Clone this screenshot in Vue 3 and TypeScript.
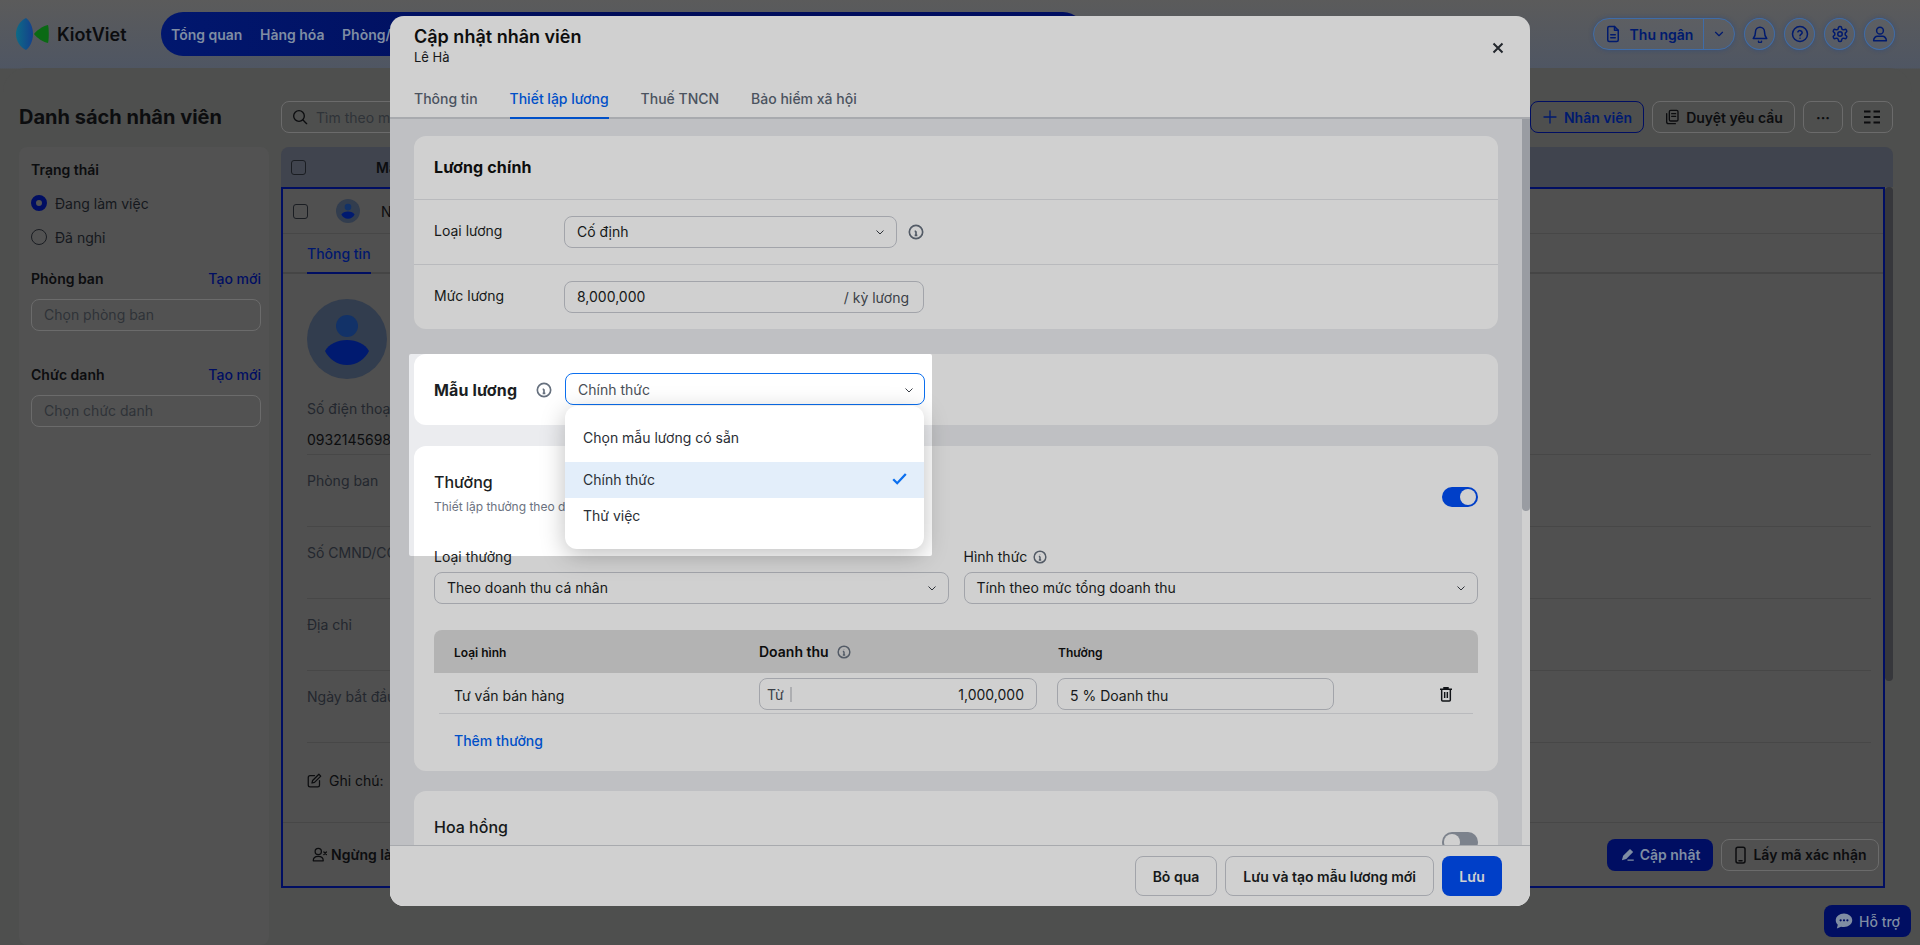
<script setup lang="ts">
const navItems = ['Tổng quan', 'Hàng hóa', 'Phòng/Bàn']
const tabs = ['Thông tin', 'Thiết lập lương', 'Thuế TNCN', 'Bảo hiểm xã hội']
const fields = ['Phòng ban', 'Số CMND/CCCD', 'Địa chỉ', 'Ngày bắt đầu làm việc']
const options = ['Chọn mẫu lương có sẵn', 'Chính thức', 'Thử việc']
</script>

<template>
  <div class="page">
    <header class="topbar">
      <div class="logo">
        <svg width="33" height="32" viewBox="0 0 33 32">
          <defs>
            <linearGradient id="lg" x1="0" y1="0" x2="1" y2="0">
              <stop offset="0" stop-color="#0d6a86" />
              <stop offset="1" stop-color="#14408c" />
            </linearGradient>
          </defs>
          <path d="M10 0C4 3 0 9 0 16s4 13 10 16c4-3 7-9 7-16S14 3 10 0z" fill="url(#lg)" />
          <path d="M32 7c-5 1-11 5-14 9 3 4 9 8 14 9 1-3 1-15 0-18z" fill="#0a6a14" />
        </svg>
        <span>KiotViet</span>
      </div>
      <nav class="nav">
        <a v-for="n in navItems" :key="n">{{ n }}</a>
      </nav>
      <div class="top-actions">
        <div class="cashier">
          <span class="cashier-main">
            <svg width="18" height="18" viewBox="0 0 24 24" class="ic"><path d="M14 2H7a2 2 0 0 0-2 2v16a2 2 0 0 0 2 2h10a2 2 0 0 0 2-2V7z" /><path d="M14 2v5h5M9 13h6M9 17h6" /></svg>
            Thu ngân
          </span>
          <span class="cashier-caret">
            <svg width="14" height="14" viewBox="0 0 24 24" class="ic"><path d="M6 9l6 6 6-6" /></svg>
          </span>
        </div>
        <span class="round">
          <svg width="18" height="18" viewBox="0 0 24 24" class="ic"><path d="M6 9a6 6 0 0 1 12 0c0 6 2 8 3 9H3c1-1 3-3 3-9" /><path d="M10 21.5a2 2 0 0 0 4 0" /></svg>
        </span>
        <span class="round">
          <svg width="18" height="18" viewBox="0 0 24 24" class="ic"><circle cx="12" cy="12" r="10" /><path d="M9.2 9.2a3 3 0 0 1 5.7 1c0 2-2.9 2.6-2.9 4" /><path d="M12 17.6v.1" /></svg>
        </span>
        <span class="round">
          <svg width="18" height="18" viewBox="0 0 24 24" class="ic"><path d="M12.22 2h-.44a2 2 0 0 0-2 2v.18a2 2 0 0 1-1 1.73l-.43.25a2 2 0 0 1-2 0l-.15-.08a2 2 0 0 0-2.73.73l-.22.38a2 2 0 0 0 .73 2.73l.15.1a2 2 0 0 1 1 1.72v.51a2 2 0 0 1-1 1.74l-.15.09a2 2 0 0 0-.73 2.73l.22.38a2 2 0 0 0 2.73.73l.15-.08a2 2 0 0 1 2 0l.43.25a2 2 0 0 1 1 1.73V20a2 2 0 0 0 2 2h.44a2 2 0 0 0 2-2v-.18a2 2 0 0 1 1-1.73l.43-.25a2 2 0 0 1 2 0l.15.08a2 2 0 0 0 2.73-.73l.22-.39a2 2 0 0 0-.73-2.73l-.15-.08a2 2 0 0 1-1-1.74v-.5a2 2 0 0 1 1-1.74l.15-.09a2 2 0 0 0 .73-2.73l-.22-.38a2 2 0 0 0-2.73-.73l-.15.08a2 2 0 0 1-2 0l-.43-.25a2 2 0 0 1-1-1.73V4a2 2 0 0 0-2-2z" /><circle cx="12" cy="12" r="3" /></svg>
        </span>
        <span class="round">
          <svg width="18" height="18" viewBox="0 0 24 24" class="ic"><circle cx="12" cy="7.5" r="4.5" /><path d="M3.5 21c0-4 3-6 5-6h7c2 0 5 2 5 6z" /></svg>
        </span>
      </div>
    </header>

    <main class="panel">
      <div class="toolbar">
        <h1>Danh sách nhân viên</h1>
        <div class="search">
          <svg width="16" height="16" viewBox="0 0 24 24" class="ic dark"><circle cx="10.5" cy="10.5" r="8" /><path d="M16.5 16.5L22 22" /></svg>
          <span>Tìm theo mã, tên nhân viên</span>
        </div>
        <button class="tbtn blue">
          <svg width="16" height="16" viewBox="0 0 24 24" class="ic"><path d="M12 3v18M3 12h18" /></svg>
          Nhân viên
        </button>
        <button class="tbtn approve">
          <svg width="16" height="16" viewBox="0 0 24 24" class="ic dark"><rect x="8" y="2" width="13" height="16" rx="2" /><path d="M11.5 7h6M11.5 11h6M4 7v12a3 3 0 0 0 3 3h10" /></svg>
          Duyệt yêu cầu
        </button>
        <button class="tbtn icon-only w40">···</button>
        <button class="tbtn icon-only w42">
          <svg width="16" height="14" viewBox="0 0 16 14" class="ic dark sharp"><path d="M0 1.5h6.5M9.5 1.5H16M0 7h6.5M9.5 7H16M0 12.5h6.5M9.5 12.5H16" /></svg>
        </button>
      </div>

      <div class="columns">
        <aside class="filters">
          <div class="f-title">Trạng thái</div>
          <div class="radio on-row"><i class="dot on"></i>Đang làm việc</div>
          <div class="radio"><i class="dot"></i>Đã nghỉ</div>
          <div class="f-head"><b>Phòng ban</b><a>Tạo mới</a></div>
          <div class="f-input">Chọn phòng ban</div>
          <div class="f-head second"><b>Chức danh</b><a>Tạo mới</a></div>
          <div class="f-input">Chọn chức danh</div>
        </aside>

        <section class="table">
          <div class="thead"><i class="cb"></i><b>Mã</b></div>
          <div class="tbody">
            <div class="selected">
              <div class="row1">
                <i class="cb"></i>
                <span class="mini-ava">
                  <svg width="24" height="24" viewBox="0 0 80 80"><circle cx="40" cy="40" r="40" fill="#323d4e" /><circle cx="40" cy="27" r="11" fill="#123268" /><path d="M18 52c4-7 12-10 22-10s18 3 22 10c-4 8-12 14-22 14S22 60 18 52z" fill="#001a70" /></svg>
                </span>
                <span class="emp-code">N</span>
              </div>
              <div class="d-tabs"><span>Thông tin</span></div>
              <div class="detail">
                <svg class="big-ava" width="80" height="80" viewBox="0 0 80 80"><circle cx="40" cy="40" r="40" fill="#323d4e" /><circle cx="40" cy="27" r="11" fill="#123268" /><path d="M18 52c4-7 12-11 22-11s18 4 22 11c-4 8-12 14-22 14S22 60 18 52z" fill="#001a70" /></svg>
                <div class="field phone">
                  <p>Số điện thoại</p>
                  <p class="val">0932145698</p>
                </div>
                <div v-for="f in fields" :key="f" class="field"><p>{{ f }}</p></div>
                <div class="note">
                  <svg width="15" height="15" viewBox="0 0 24 24" class="ic dark"><path d="M12 4H5a3 3 0 0 0-3 3v12a3 3 0 0 0 3 3h12a3 3 0 0 0 3-3v-7" /><path d="M19 2l3 3-10 10-4 1 1-4z" /></svg>
                  Ghi chú:
                </div>
              </div>
              <div class="d-foot">
                <span class="stop">
                  <svg width="15" height="15" viewBox="0 0 24 24" class="ic dark"><circle cx="10" cy="7" r="5" /><path d="M2 22c0-4 3-7 8-7s8 3 8 7zM19 8l4 4M23 8l-4 4" /></svg>
                  Ngừng làm việc
                </span>
                <span class="grow"></span>
                <button class="save-btn">
                  <svg width="15" height="15" viewBox="0 0 24 24" fill="#7f8da3"><path d="M16 3l5 5-11 11-7 2 2-7zM12 22h10v-2H12z" /></svg>
                  Cập nhật
                </button>
                <button class="code-btn">
                  <svg width="15" height="18" viewBox="0 0 16 24" class="ic dark"><rect x="2" y="1.5" width="12" height="21" rx="2.5" /><path d="M6 19.5h4" /></svg>
                  Lấy mã xác nhận
                </button>
              </div>
            </div>
            <div class="t-scroll"><div class="t-thumb"></div></div>
          </div>
        </section>
      </div>
    </main>

    <a class="support">
      <svg width="18" height="18" viewBox="0 0 24 24" fill="#7f8da3"><path d="M12 2C6 2 1 6 1 11c0 2.300 1 4.400 2.700 6L2.500 22l5.500-2.500c1.300.4 2.600.5 4 .5 6 0 11-4 11-9s-5-9-11-9z" /><circle cx="7.500" cy="11" r="1.500" fill="#000e62" /><circle cx="12" cy="11" r="1.500" fill="#000e62" /><circle cx="16.500" cy="11" r="1.500" fill="#000e62" /></svg>
      Hỗ trợ
    </a>

    <div class="modal">
      <div class="m-head">
        <h2>Cập nhật nhân viên</h2>
        <p>Lê Hà</p>
        <svg class="close" width="12" height="12" viewBox="0 0 12 12"><path d="M1.500 1.500l9 9M10.500 1.500l-9 9" stroke="#2b3038" stroke-width="2" fill="none" /></svg>
      </div>
      <div class="m-tabs">
        <span v-for="(t, i) in tabs" :key="t" :class="{ active: i === 1 }">{{ t }}</span>
      </div>

      <div class="m-body">
        <div class="m-content">
          <section class="card first">
            <h3 class="card-row title">Lương chính</h3>
            <div class="card-row">
              <label>Loại lương</label>
              <div class="sel w333">
                Cố định
                <svg width="12" height="12" viewBox="0 0 24 24" class="chev"><path d="M5 9l7 7 7-7" /></svg>
              </div>
              <svg width="16" height="16" viewBox="0 0 24 24" class="info after"><circle cx="12" cy="12" r="10" /><path d="M12 11v6M12 7v.1M10 11h2M10 17h4" /></svg>
            </div>
            <div class="card-row">
              <label>Mức lương</label>
              <div class="sel w360">8,000,000<span class="unit">/ kỳ lương</span></div>
            </div>
          </section>

          <section class="card template">
            <b>Mẫu lương</b>
            <svg width="16" height="16" viewBox="0 0 24 24" class="info"><circle cx="12" cy="12" r="10" /><path d="M12 11v6M12 7v.1M10 11h2M10 17h4" /></svg>
            <div class="tpl-select">
              Chính thức
              <svg width="12" height="12" viewBox="0 0 24 24" class="chev"><path d="M5 9l7 7 7-7" /></svg>
            </div>
            <ul class="menu">
              <li v-for="(o, i) in options" :key="o" :class="{ picked: i === 1 }">
                <span>{{ o }}</span>
                <svg v-if="i === 1" width="15" height="12" viewBox="0 0 15 12"><path d="M1.200 6.200l4 4L13.800 1" stroke="#0b6fef" stroke-width="2.300" fill="none" /></svg>
              </li>
            </ul>
          </section>

          <section class="card bonus">
            <div class="bonus-head">
              <div>
                <h4>Thưởng</h4>
                <p>Thiết lập thưởng theo d</p>
              </div>
              <span class="toggle on"><i></i></span>
            </div>
            <div class="bonus-selects">
              <div>
                <label>Loại thưởng</label>
                <div class="sel">
                  Theo doanh thu cá nhân
                  <svg width="12" height="12" viewBox="0 0 24 24" class="chev"><path d="M5 9l7 7 7-7" /></svg>
                </div>
              </div>
              <div>
                <label>Hình thức
                  <svg width="14" height="14" viewBox="0 0 24 24" class="info ml2"><circle cx="12" cy="12" r="10" /><path d="M12 11v6M12 7v.1M10 11h2M10 17h4" /></svg>
                </label>
                <div class="sel">
                  Tính theo mức tổng doanh thu
                  <svg width="12" height="12" viewBox="0 0 24 24" class="chev"><path d="M5 9l7 7 7-7" /></svg>
                </div>
              </div>
            </div>
            <div class="b-table">
              <div class="b-head">
                <span>Loại hình</span>
                <span class="big">Doanh thu
                  <svg width="14" height="14" viewBox="0 0 24 24" class="info"><circle cx="12" cy="12" r="10" /><path d="M12 11v6M12 7v.1M10 11h2M10 17h4" /></svg>
                </span>
                <span>Thưởng</span>
              </div>
              <div class="b-row">
                <span class="b-name">Tư vấn bán hàng</span>
                <div class="sel from"><span class="from-l">Từ</span><span>1,000,000</span></div>
                <div class="sel pct">5 % Doanh thu</div>
                <svg class="trash" width="16" height="16" viewBox="0 0 24 24"><path d="M3 5h18M9 5V2.500h6V5M5.500 5v16a1.500 1.500 0 0 0 1.500 1.500h10a1.500 1.500 0 0 0 1.500-1.500V5M10 9v9M14 9v9" stroke="#15181d" stroke-width="2.200" fill="none" /></svg>
              </div>
              <a class="add">Thêm thưởng</a>
            </div>
          </section>

          <section class="card commission">
            <h4>Hoa hồng</h4>
            <span class="toggle"><i></i></span>
          </section>
        </div>
        <div class="m-scroll"><div class="m-thumb"></div></div>
      </div>

      <div class="m-foot">
        <button>Bỏ qua</button>
        <button>Lưu và tạo mẫu lương mới</button>
        <button class="primary">Lưu</button>
      </div>

      <div class="tour-hole"></div>
    </div>
  </div>
</template>

<style>
html, body { margin: 0; background: #4e4f4e; }
</style>

<style scoped>
* { box-sizing: border-box; }
.page {
  position: relative;
  width: 1920px;
  height: 945px;
  overflow: hidden;
  font-family: Inter, "Noto Sans", sans-serif;
  font-size: 14px;
  color: #0c0d0f;
  background: linear-gradient(180deg, #5b5b5b 0, #4f5663 68px, #4e4f4e 69px);
}
p, h1, h2, h3, h4, ul { margin: 0; padding: 0; }
button { font: inherit; cursor: pointer; }
.ic { fill: none; stroke: #001a6e; stroke-width: 2; stroke-linecap: round; stroke-linejoin: round; flex: none; }
.ic.dark { stroke: #0c0d0f; }
.ic.sharp { stroke-linecap: butt; }

.topbar { height: 68px; display: flex; align-items: flex-start; padding: 12px 8px 0 16px; }
.logo { display: flex; align-items: center; gap: 8px; width: 145px; height: 44px; font-size: 18px; font-weight: 600; }
.nav { width: 924px; height: 44px; border-radius: 22px; background: linear-gradient(90deg, #01176e, #000c58 50%, #000e62); display: flex; align-items: center; gap: 17.500px; padding: 0 10px; overflow: hidden; }
.nav a { color: #7f8da3; font-weight: 600; white-space: nowrap; }
.top-actions { margin-left: auto; display: flex; align-items: center; gap: 9px; padding-top: 6px; padding-right: 17px; }
.cashier { display: flex; width: 142px; height: 32px; border: 1px solid #3f6ca8; border-radius: 16px; background: rgba(255, 255, 255, 0.03); box-shadow: 0 0 4px rgba(30, 70, 140, 0.5); color: #001a6e; font-weight: 600; }
.cashier-main { width: 110px; display: flex; align-items: center; justify-content: center; gap: 8px; border-right: 1px solid #3f6ca8; }
.cashier-caret { flex: 1; display: flex; align-items: center; justify-content: center; }
.round { width: 31px; height: 32px; border: 1px solid #3f6ca8; border-radius: 50%; background: rgba(255, 255, 255, 0.03); box-shadow: 0 0 4px rgba(30, 70, 140, 0.5); display: flex; align-items: center; justify-content: center; }

.panel { margin: 0 8px 0 3px; height: 877px; background: #4e4f4e; border-radius: 24px 24px 0 0; padding: 33px 19px 0 16px; }
.toolbar { display: flex; align-items: center; gap: 8px; height: 32px; }
.toolbar h1 { width: 254px; font-size: 20px; font-weight: 700; white-space: nowrap; flex: none; }
.search { width: 1241px; flex: none; height: 32px; border: 1px solid #6b6b6b; border-radius: 8px; display: flex; align-items: center; gap: 8px; padding: 0 10px; color: #2f3338; }
.tbtn { height: 32px; flex: none; display: inline-flex; align-items: center; justify-content: center; gap: 6px; border: 1px solid #6b6b6b; border-radius: 8px; background: transparent; color: #0c0d0f; font-weight: 600; padding: 0; white-space: nowrap; }
.tbtn.blue { border-color: #000e62; color: #001a6e; width: 114px; }
.tbtn.approve { width: 143px; }
.icon-only { font-weight: 700; }
.w40 { width: 40px; }
.w42 { width: 42px; }

.columns { display: flex; gap: 12px; margin-top: 14px; height: 798px; }
.filters { width: 250px; background: #525252; border-radius: 8px; padding: 14px 8px 0 12px; }
.f-title { font-weight: 600; line-height: 17px; }
.radio { display: flex; align-items: center; gap: 8px; height: 16px; margin-top: 18px; color: #15181d; }
.radio.on-row { margin-top: 17px; }
.dot { width: 16px; height: 16px; border-radius: 50%; border: 1.500px solid #1a1d22; }
.dot.on { border: 5px solid #000e62; background: #525252; }
.f-head { display: flex; justify-content: space-between; margin-top: 25px; line-height: 17px; }
.f-head.second { margin-top: 35px; }
.f-head b { font-weight: 600; }
.f-head a { color: #000e62; font-weight: 500; }
.f-input { height: 32px; margin-top: 12px; border: 1px solid #6b6b6b; border-radius: 8px; padding: 0 12px; line-height: 30px; color: #2f3338; }

.table { width: 1612px; }
.thead { height: 40px; background: #40444e; border-radius: 8px 8px 0 0; display: flex; align-items: center; padding-left: 10px; }
.thead b { margin-left: 70px; font-weight: 600; }
.cb { display: block; width: 15px; height: 15px; border: 1.500px solid #1a1d22; border-radius: 3px; flex: none; }
.tbody { display: flex; align-items: flex-start; }
.selected { width: 1604px; height: 701px; border: 2px solid #000e62; background: #505050; display: flex; flex-direction: column; }
.t-scroll { width: 8px; height: 494px; }
.t-thumb { height: 100%; background: #36373b; border-radius: 4px; }
.row1 { height: 45px; flex: none; display: flex; align-items: center; padding-left: 10px; border-bottom: 1px solid #474747; }
.mini-ava { margin-left: 28px; display: flex; }
.emp-code { margin-left: 21px; }
.d-tabs { height: 40px; flex: none; border-bottom: 2px solid #454545; padding-left: 24px; display: flex; }
.d-tabs span { width: 64px; height: 40px; line-height: 40px; color: #00186e; font-weight: 500; border-bottom: 2px solid #000e62; white-space: nowrap; }
.detail { flex: 1; padding: 25px 12px 0 24px; }
.big-ava { display: block; }
.field { height: 72px; border-bottom: 1px solid #474747; padding-top: 17px; line-height: 17px; color: #23272e; }
.field.phone { height: 76px; padding-top: 21px; }
.val { margin-top: 14px; color: #0c0d0f; }
.note { display: flex; align-items: center; gap: 7px; padding-top: 29px; line-height: 17px; }
.d-foot { height: 64px; flex: none; border-top: 1px solid #474747; display: flex; align-items: center; padding: 0 4px 0 29px; gap: 8px; }
.stop { display: flex; align-items: center; gap: 4px; font-weight: 600; white-space: nowrap; }
.grow { flex: 1; }
.save-btn, .code-btn { height: 32px; border-radius: 8px; display: inline-flex; align-items: center; justify-content: center; gap: 5px; font-weight: 600; white-space: nowrap; }
.save-btn { width: 106px; border: 0; background: #000e62; color: #7f8da3; }
.code-btn { width: 158px; border: 1px solid #6b6b6b; background: transparent; color: #0c0d0f; }

.support { position: absolute; right: 9px; bottom: 8px; width: 87px; height: 32px; border-radius: 8px; background: #000e62; color: #7f8da3; display: flex; align-items: center; justify-content: center; gap: 6px; font-weight: 500; }

.modal { position: absolute; left: 390px; top: 16px; width: 1140px; height: 890px; background: #fff; border-radius: 14px; overflow: hidden; display: flex; flex-direction: column; }
.m-head { position: relative; height: 63px; flex: none; padding: 10px 24px 0; }
.m-head h2 { font-size: 18px; font-weight: 600; line-height: 22px; color: #111; }
.m-head p { font-size: 13px; line-height: 16px; margin-top: 1px; color: #1a1d22; }
.close { position: absolute; right: 26px; top: 26px; }
.m-tabs { height: 40px; flex: none; padding-left: 24px; display: flex; gap: 32px; border-bottom: 2px solid #ced1d6; }
.m-tabs span { height: 40px; padding-top: 10px; line-height: 20px; color: #5b6675; font-weight: 500; white-space: nowrap; }
.m-tabs .active { color: #0062f5; border-bottom: 2px solid #0062f5; }

.m-body { flex: 1; min-height: 0; display: flex; background: #ebecef; }
.m-content { flex: 1; min-width: 0; padding: 17px 24px 0; overflow: hidden; }
.m-scroll { width: 8px; background: #fff; flex: none; }
.m-thumb { height: 392px; background: #bcc0c7; border-radius: 0 0 4px 4px; }
.card { background: #fff; border-radius: 12px; margin-bottom: 20px; }
.card.first { margin-bottom: 25px; }
.card-row { height: 65px; display: flex; align-items: center; border-top: 1px solid #e3e5e8; padding: 0 20px; color: #1b1e23; }
.card-row label { width: 130px; flex: none; padding-bottom: 3px; }
.card-row.title { height: 63px; border-top: 0; padding-bottom: 2px; font-size: 16px; font-weight: 700; letter-spacing: 0.15px; color: #111; }
.sel { height: 32px; border: 1px solid #c7cad1; border-radius: 8px; display: flex; align-items: center; justify-content: space-between; padding: 0 10px 2px 12px; color: #1b1e23; white-space: nowrap; }
.w333 { width: 333px; }
.w360 { width: 360px; }
.unit { color: #4a4f57; padding-right: 4px; padding-top: 3px; }
.chev { fill: none; stroke: #3a3f47; stroke-width: 2; flex: none; margin-top: 2px; }
.info { fill: none; stroke: #66707e; stroke-width: 2.500; vertical-align: -2px; flex: none; }
.info.after { margin-left: 11px; }
.info.ml2 { margin-left: 2px; }

.card.template { position: relative; height: 71px; margin-bottom: 21px; display: flex; align-items: center; padding-left: 20px; z-index: 2; }
.template b { font-size: 16px; font-weight: 700; letter-spacing: 0.15px; width: 102px; color: #1b1e23; white-space: nowrap; }
.tpl-select { position: absolute; left: 151px; top: 19px; width: 360px; height: 32px; border: 1.500px solid #0b6fef; border-radius: 8px; padding: 0 9px 0 12px; display: flex; align-items: center; justify-content: space-between; color: #4a4f57; background: #fff; }
.menu { position: absolute; left: 151px; top: 52px; width: 359px; height: 143px; background: #fff; border-radius: 12px; list-style: none; padding-top: 14px; box-shadow: 0 6px 24px rgba(0, 0, 0, 0.25); }
.menu li { height: 36px; display: flex; align-items: center; justify-content: space-between; padding: 0 17px 2px 18px; color: #2a2e35; }
.menu li:first-child { margin-bottom: 6px; }
.menu li.picked { background: #e3eefa; }

.card.bonus { height: 325px; padding: 0 20px; }
.bonus-head { display: flex; justify-content: space-between; align-items: center; padding-top: 26px; height: 100px; }
.bonus-head > div { align-self: flex-start; }
.bonus-head h4, .commission h4 { font-size: 16px; font-weight: 500; line-height: 20px; color: #1b1e23; }
.bonus-head p { font-size: 12px; line-height: 16px; margin-top: 7px; color: #6b7280; white-space: nowrap; }
.bonus-head .toggle { margin-top: -24px; }
.toggle { width: 36px; height: 20px; border-radius: 10px; background: #99a0ac; padding: 2px; display: flex; flex: none; }
.toggle i { width: 16px; height: 16px; background: #fff; border-radius: 50%; }
.toggle.on { background: #004ef5; justify-content: flex-end; }
.bonus-selects { display: flex; gap: 15px; margin-top: 2px; }
.bonus-selects > div { flex: 1; min-width: 0; }
.bonus-selects label { display: block; height: 24px; line-height: 17px; color: #1b1e23; }
.b-table { margin-top: 26px; }
.b-head { height: 43px; background: #dcdcdc; border-radius: 8px 8px 0 0; display: grid; grid-template-columns: 305px 299px 1fr; align-items: center; padding-left: 20px; font-size: 12px; font-weight: 600; color: #111; }
.b-head span { padding-top: 1px; }
.b-head .big { font-size: 14px; padding-top: 0; }
.b-head .info { margin-left: 5px; }
.b-row { height: 41px; margin: 0 5px; border-bottom: 1px solid #e3e5e8; display: flex; align-items: flex-start; padding: 5px 0 0 15px; position: relative; }
.b-name { width: 305px; flex: none; padding-top: 9px; color: #1b1e23; }
.from { width: 278px; flex: none; padding: 0 12px 0 7px; }
.from-l { border-right: 2px solid #d4d6da; padding-right: 6px; color: #4a4f57; line-height: 15px; }
.pct { width: 277px; margin-left: 20px; padding: 2px 12px 0 12px; }
.trash { position: absolute; right: 19px; top: 13px; }
.add { display: block; margin: 18px 0 0 20px; color: #0062f5; font-weight: 500; line-height: 17px; }

.card.commission { height: 120px; margin: 0; padding: 26px 20px 0; display: flex; justify-content: space-between; align-items: flex-start; }
.commission .toggle { margin-top: 15px; }

.m-foot { height: 61px; flex: none; background: #fff; border-top: 1px solid #ced1d6; display: flex; justify-content: flex-end; align-items: center; gap: 8px; padding-right: 28px; }
.m-foot button { height: 40px; padding: 0 17px; border: 1px solid #c7cad1; border-radius: 8px; background: #fff; font-weight: 600; color: #1b1e23; white-space: nowrap; }
.m-foot .primary { width: 60px; padding: 0; border: 0; background: #004ef5; color: #fff; }

/* vùng sáng của tour hướng dẫn */
.tour-hole { position: absolute; left: 18.500px; top: 338px; width: 523px; height: 202px; border-radius: 2px; box-shadow: 0 0 0 2000px rgba(0, 0, 0, 0.184); pointer-events: none; z-index: 5; }
</style>
